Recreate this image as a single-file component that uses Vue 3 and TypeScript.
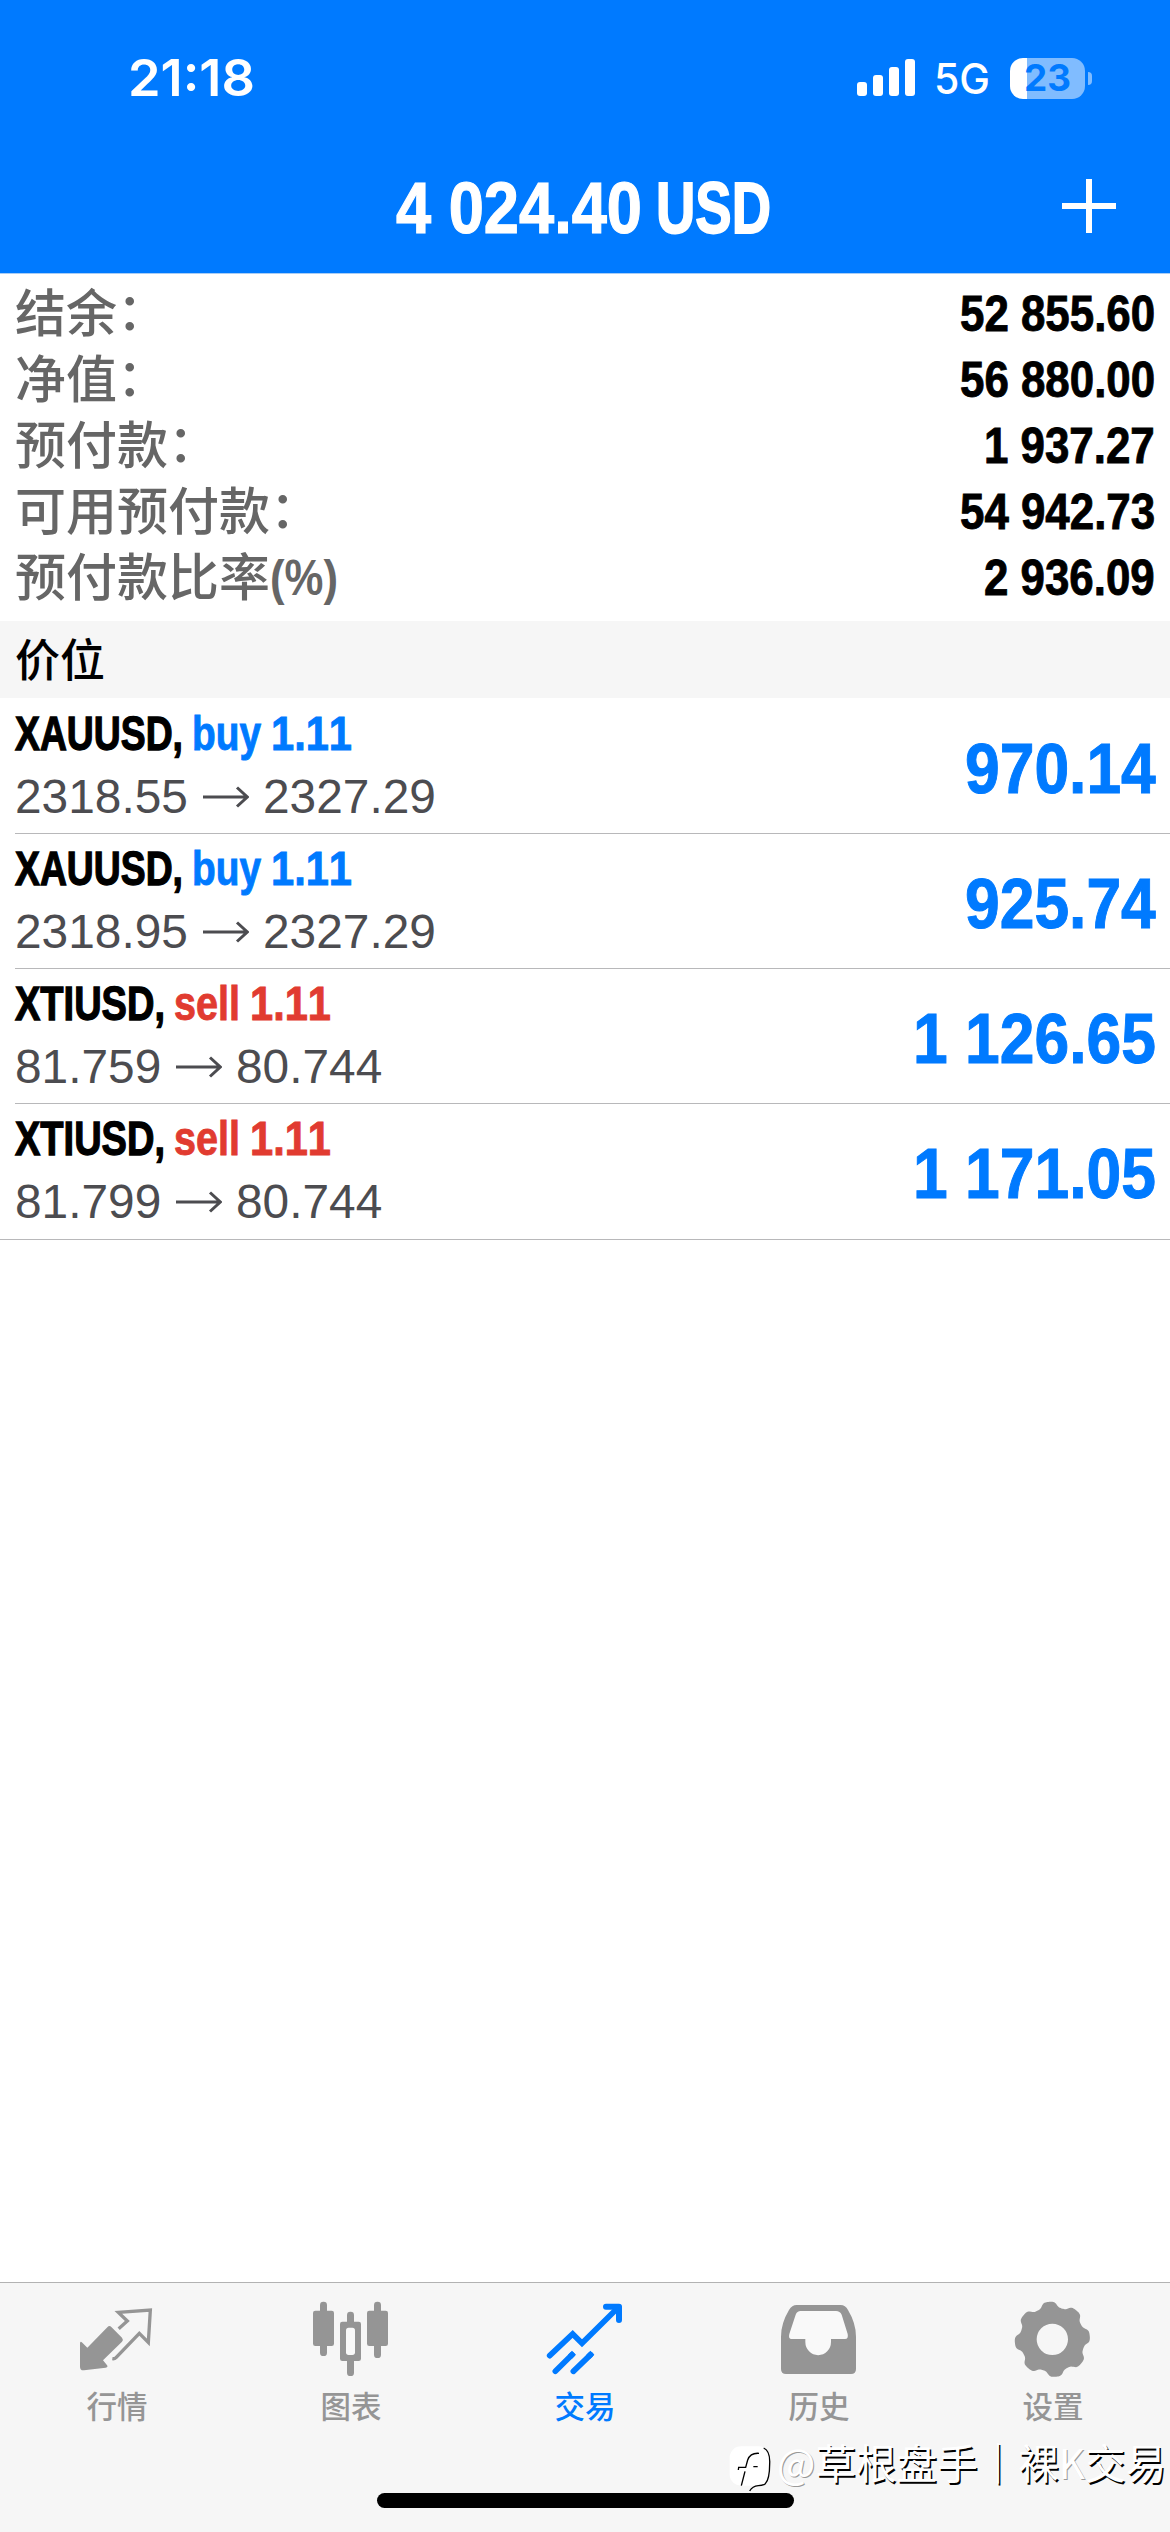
<script setup lang="ts">
import { h, type FunctionalComponent } from 'vue'

interface FitProps {
  text: string
  width: number
  size: number
  family?: string
  weight?: number
  bold?: number
}

const ruler = document.createElement('canvas').getContext('2d')!

function naturalWidth(text: string, font: string): number {
  ruler.font = font
  ruler.fontKerning = 'none'
  return ruler.measureText(text).width
}

/* One line of text condensed to an advance width; the box is as tall as the capitals. */
const FitText: FunctionalComponent<FitProps> = (p) => {
  const cap = Math.round(p.size * 0.715)
  const family = p.family ?? '"Liberation Sans", Arial, sans-serif'
  const weight = p.weight ?? 700
  const ratio = p.width / naturalWidth(p.text, `${weight} ${p.size}px ${family}`)
  return h('svg', { width: p.width, height: cap, style: 'display:block;overflow:visible;flex:none' }, [
    h(
      'text',
      {
        x: 0,
        y: cap,
        transform: `scale(${ratio.toFixed(4)} 1)`,
        fill: 'currentColor',
        stroke: 'currentColor',
        'stroke-width': p.bold ?? 0,
        'font-size': p.size,
        'font-weight': weight,
        'font-family': family,
        style: 'font-kerning:none;white-space:pre',
      },
      p.text,
    ),
  ])
}
FitText.props = ['text', 'width', 'size', 'family', 'weight', 'bold']

const inter = 'Inter, sans-serif'

/* Advance width of a figure string: digits, and narrow blanks and points. */
function figures(text: string, digit: number): number {
  return [...text].reduce((sum, c) => sum + (/\d/.test(c) ? digit : digit / 2), 0)
}

const summary = [
  { label: '结余', colon: true, value: '52 855.60' },
  { label: '净值', colon: true, value: '56 880.00' },
  { label: '预付款', colon: true, value: '1 937.27' },
  { label: '可用预付款', colon: true, value: '54 942.73' },
  { label: '预付款比率', colon: false, value: '2 936.09' },
]

const positions = [
  { symbol: 'XAUUSD,', symbolWidth: 168, side: 'buy', sideWidth: 69, open: '2318.55', now: '2327.29', profit: '970.14' },
  { symbol: 'XAUUSD,', symbolWidth: 168, side: 'buy', sideWidth: 69, open: '2318.95', now: '2327.29', profit: '925.74' },
  { symbol: 'XTIUSD,', symbolWidth: 150, side: 'sell', sideWidth: 66, open: '81.759', now: '80.744', profit: '1 126.65' },
  { symbol: 'XTIUSD,', symbolWidth: 150, side: 'sell', sideWidth: 66, open: '81.799', now: '80.744', profit: '1 171.05' },
]

function gearPath(): string {
  const pts: string[] = []
  for (let i = 0; i < 240; i++) {
    const a = (i / 240) * Math.PI * 2
    const r = 104.5 + 8.5 * Math.tanh(1.8 * Math.cos(8 * (a + 0.09)) + 0.3)
    pts.push(`${(120 + r * Math.sin(a)).toFixed(1)} ${(120 - r * Math.cos(a)).toFixed(1)}`)
  }
  return `M${pts.join('L')}ZM167 120a47 47 0 1 0-94 0a47 47 0 1 0 94 0Z`
}
const gear = gearPath()
</script>

<template>
  <div class="screen">
    <header class="header">
      <div class="status">
        <FitText class="time" text="21:18" :width="127" :size="51" :family="inter" :weight="600" />
        <div class="indicators">
          <svg width="58" height="38" viewBox="0 0 58 38" fill="#fff">
            <rect x="0" y="23" width="10" height="14" rx="3" />
            <rect x="16" y="16" width="10" height="21" rx="3" />
            <rect x="32" y="8" width="10" height="29" rx="3" />
            <rect x="48" y="0" width="10" height="37" rx="3" />
          </svg>
          <FitText class="network" text="5G" :width="56" :size="42" :family="inter" :weight="500" />
          <div class="battery">
            <FitText text="23" :width="47" :size="37" :family="inter" :weight="700" />
          </div>
          <div class="battery-tip"></div>
        </div>
      </div>
      <div class="nav">
        <div class="nav-title">
          <FitText text="4 024.40" :width="246" :size="72" :bold="1.2" />
          <FitText text="USD" :width="115" :size="72" :bold="1.8" />
        </div>
        <svg class="plus" width="54" height="54" viewBox="0 0 54 54" stroke="#fff" stroke-width="6">
          <path d="M27 0V54M0 27H54" />
        </svg>
      </div>
    </header>

    <section class="summary">
      <div v-for="row in summary" :key="row.label" class="summary-row">
        <div class="summary-label">
          <span>{{ row.label }}</span>
          <span v-if="row.colon" class="colon">：</span>
          <FitText v-else class="percent" text="(%)" :width="68" :size="50" />
        </div>
        <FitText :text="row.value" :width="figures(row.value, 24.4)" :size="50" :bold="0.9" />
      </div>
    </section>

    <div class="section-title">价位</div>

    <main class="list">
      <div v-for="(p, i) in positions" :key="i" class="position">
        <div class="details">
          <div class="line">
            <FitText :text="p.symbol" :width="p.symbolWidth" :size="48" :bold="1.3" />
            <div class="order" :class="p.side">
              <FitText :text="p.side" :width="p.sideWidth" :size="48" :bold="0.9" />
              <FitText text="1.11" :width="81" :size="48" :bold="0.9" />
            </div>
          </div>
          <div class="line prices">
            <FitText :text="p.open" :width="figures(p.open, 26.6)" :size="48" :weight="400" />
            <svg class="arrow" width="46" height="22" viewBox="0 0 46 22" fill="none" stroke="currentColor" stroke-width="3">
              <path d="M0 11H44M34 1.5L44.3 11L34 20.5" />
            </svg>
            <FitText :text="p.now" :width="figures(p.now, 26.6)" :size="48" :weight="400" />
          </div>
        </div>
        <FitText class="profit" :text="p.profit" :width="figures(p.profit, 34.7)" :size="71" :bold="1" />
      </div>
    </main>

    <nav class="tabs">
      <div class="tab">
        <svg width="80" height="80" viewBox="231 90 240 240" fill="currentColor">
          <path d="M240 221Q240 211 247 218L262 233L322 172Q328 165 334 171L366 203Q371 209 366 215L309 271L320 284Q326 291 317 293L252 301Q240 302 240 290Z" />
          <path d="M356 176L382 153L355 127L451 120L445 217L418 190L348 263Q344 267 337 266" fill="none" stroke="currentColor" stroke-width="10" />
        </svg>
        <span>行情</span>
      </div>
      <div class="tab">
        <svg width="80" height="80" viewBox="933 90 240 240" fill="currentColor">
          <rect x="960" y="95" width="21" height="163" rx="10" />
          <rect x="939" y="122" width="63" height="106" rx="7" />
          <rect x="1122" y="95" width="21" height="169" rx="10" />
          <rect x="1101" y="122" width="63" height="106" rx="7" />
          <rect x="1041" y="125" width="21" height="42" rx="10" />
          <rect x="1041" y="258" width="21" height="60" rx="10" />
          <rect x="1020" y="155" width="63" height="118" rx="7" />
          <rect x="1038" y="173" width="27" height="82" rx="8" class="hollow" />
        </svg>
        <span>图表</span>
      </div>
      <div class="tab active">
        <svg width="80" height="80" viewBox="195 90 240 240" fill="none" stroke="currentColor" stroke-width="17" stroke-linecap="round" stroke-linejoin="round">
          <path d="M209 257L278 192L306 220L416 111" stroke-linejoin="miter" />
          <path d="M378 110H417V150" stroke-width="18" />
          <path d="M226 304L276 254M280 304L332 254" />
          <path d="M270 260L282 248M325 260L337 248" stroke-linecap="butt" />
        </svg>
        <span>交易</span>
      </div>
      <div class="tab">
        <svg width="80" height="80" viewBox="897 90 240 240" fill="currentColor">
          <path d="M903 200Q903 160 927 120Q936 105 950 105H1082Q1096 105 1104 120Q1128 160 1128 200V297Q1128 312 1113 312H918Q903 312 903 297Z" />
          <path class="hollow" d="M958 123H1068Q1080 123 1085 134L1103 192Q1106 207 1095 207H1053V216A38 39 0 0 1 976 216V207H935Q924 207 928 192L947 134Q951 123 962 123Z" />
        </svg>
        <span>历史</span>
      </div>
      <div class="tab">
        <svg width="80" height="80" viewBox="2 2 240 240" fill="currentColor">
          <path :d="gear" fill-rule="evenodd" />
        </svg>
        <span>设置</span>
      </div>
    </nav>

    <div class="home-indicator"></div>

    <div class="watermark">
      <svg width="48" height="50" viewBox="0 0 144 150">
        <rect x="2" y="10" width="121" height="118" rx="34" fill="#fff" />
        <path d="M70 132L78 118L100 122L82 134Z" fill="#fff" />
        <path d="M104 15Q124 24 122 62Q122 108 109 122Q104 127 88 128Q70 130 62 144" fill="none" stroke="#000" stroke-width="4" />
        <path d="M90 31Q64 29 56 51L50 73H29L28 81M48 85L37 128M73 71H86" fill="none" stroke="#000" stroke-width="4" />
      </svg>
      <span class="watermark-text"><span class="faint">@</span>草根盘手｜裸<span class="faint">K</span>交易</span>
    </div>
  </div>
</template>

<style>
body {
  margin: 0;
  background: #fff;
}
</style>

<style scoped>
.screen {
  position: relative;
  display: flex;
  flex-direction: column;
  width: 1170px;
  height: 2532px;
  overflow: hidden;
  background: #fff;
  color: #000;
  font-family: 'Noto Sans CJK SC', sans-serif;
}
.header {
  height: 274px;
  flex: none;
  background: #007aff;
  color: #fff;
  border-bottom: 1px solid #a9cdf5;
  box-sizing: border-box;
}
.status {
  height: 156px;
  display: flex;
  align-items: center;
  justify-content: space-between;
  padding: 0 78px 0 128px;
}
.indicators {
  display: flex;
  align-items: center;
}
.network {
  margin: 2px 20px 0 19px;
}
.battery {
  width: 75px;
  height: 41px;
  border-radius: 13px;
  display: flex;
  align-items: center;
  justify-content: center;
  background: linear-gradient(90deg, #fff 17px, #80bcff 17px);
  color: #007aff;
}
.battery-tip {
  width: 4px;
  height: 13px;
  margin-left: 3px;
  border-radius: 0 5px 5px 0;
  background: #80bcff;
}
.nav {
  height: 103px;
  display: flex;
  align-items: center;
  justify-content: flex-end;
}
.nav-title {
  flex: 1;
  display: flex;
  gap: 14px;
  padding-left: 396px;
}
.plus {
  margin: 0 54px 3px 0;
}
.summary {
  height: 347px;
  flex: none;
  box-sizing: border-box;
  padding: 6px 15px 0;
}
.summary-row {
  height: 66px;
  display: flex;
  align-items: center;
  justify-content: space-between;
}
.summary-label {
  display: flex;
  align-items: center;
  color: #666;
  font-size: 51px;
  font-weight: 500;
  line-height: 66px;
  padding-bottom: 6px;
}
.colon {
  position: relative;
  top: -2px;
}
.percent {
  margin-top: 6px;
}
.section-title {
  height: 77px;
  flex: none;
  box-sizing: border-box;
  padding-left: 15px;
  background: #f6f6f6;
  font-size: 45px;
  font-weight: 500;
  line-height: 74px;
}
.list {
  flex: 1;
  padding-top: 1px;
}
.position {
  height: 135px;
  box-sizing: border-box;
  margin-left: 15px;
  padding-right: 14px;
  border-bottom: 1px solid #b8b8ba;
  display: flex;
  justify-content: space-between;
}
.position:last-child {
  height: 136px;
  margin-left: 0;
  padding-left: 15px;
}
.details {
  padding-top: 17px;
}
.line {
  display: flex;
}
.order {
  display: flex;
  gap: 10px;
  margin-left: 9px;
}
.buy {
  color: #007aff;
}
.sell {
  color: #e13b30;
}
.prices {
  margin-top: 29px;
  color: #4c4c50;
}
.arrow {
  margin: 7px 14px 0 15px;
}
.profit {
  margin-top: 43px;
  color: #007aff;
}
.tabs {
  height: 250px;
  flex: none;
  box-sizing: border-box;
  border-top: 1px solid #b2b2b2;
  background: #f6f6f6;
  display: flex;
}
.tab {
  flex: 1;
  display: flex;
  flex-direction: column;
  align-items: center;
  padding-top: 17px;
  color: #959595;
  font-size: 30.5px;
  font-weight: 500;
  line-height: 40px;
}
.tab svg {
  display: block;
}
.tab span {
  margin-top: 5px;
}
.tab.active {
  color: #007aff;
}
.hollow {
  fill: #f9f9f9;
}
.home-indicator {
  position: absolute;
  left: 377px;
  bottom: 24px;
  width: 417px;
  height: 15px;
  border-radius: 8px;
  background: #000;
}
.watermark {
  position: absolute;
  left: 729px;
  top: 2443px;
  display: flex;
  align-items: flex-start;
}
.watermark-text {
  margin-top: -6px;
  color: #fff;
  font-size: 40.6px;
  font-weight: 400;
  line-height: 50px;
  text-shadow: 1.5px 1.5px 0 #000;
  white-space: nowrap;
}
.faint {
  text-shadow: 1px 1px 0 #999;
}
</style>
